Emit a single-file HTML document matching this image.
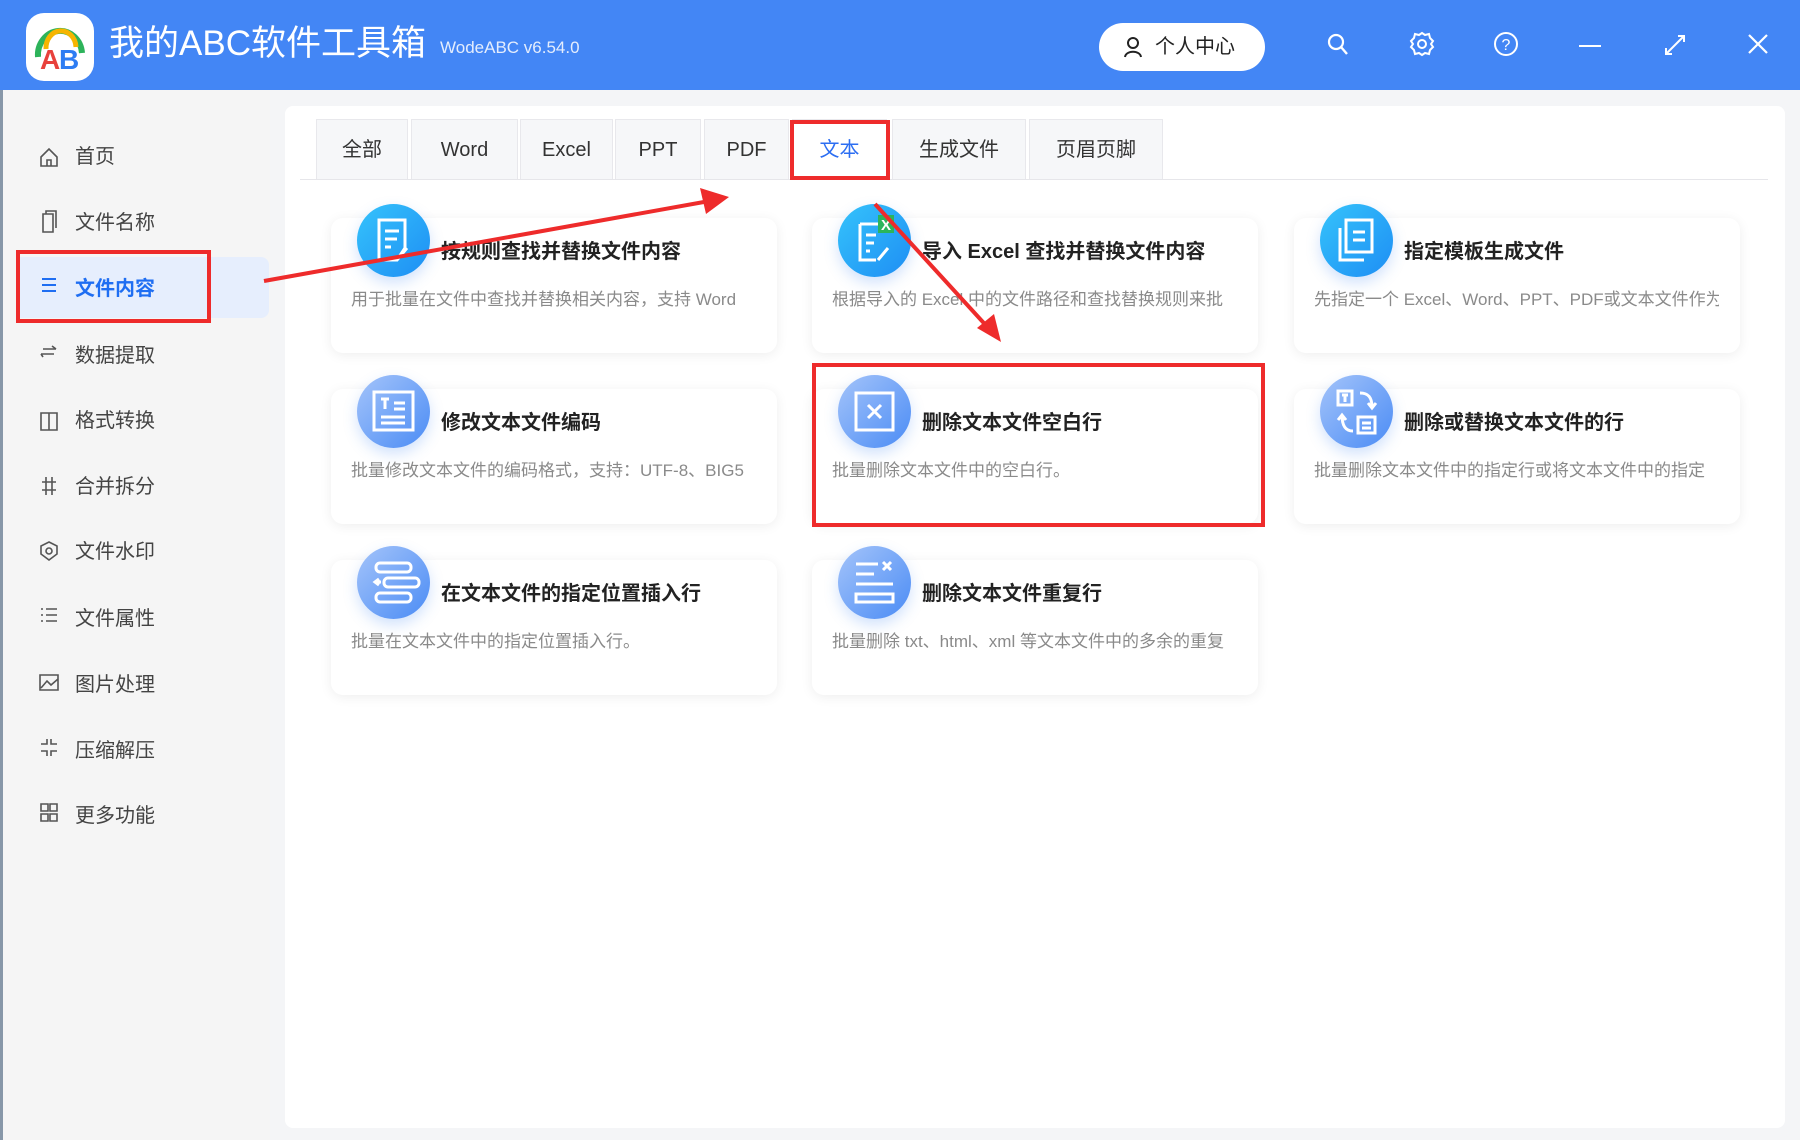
<!DOCTYPE html>
<html><head><meta charset="utf-8"><style>
*{margin:0;padding:0;box-sizing:border-box}
body{width:1800px;height:1140px;overflow:hidden;background:#f4f5f7;font-family:"Liberation Sans","Noto Sans CJK SC",sans-serif;position:relative}
.hdr{position:absolute;left:0;top:0;width:1800px;height:90px;background:#4386f5}
.logo{position:absolute;left:26px;top:13px;width:68px;height:68px;background:#fff;border-radius:18px}
.title{position:absolute;left:109px;top:22px;color:#fff;font-size:35px;line-height:44px}
.ver{position:absolute;left:440px;top:38px;color:#e4edfd;font-size:17px}
.pc{position:absolute;left:1099px;top:23px;width:166px;height:48px;background:#fff;border-radius:24px;font-size:20px;color:#222;line-height:48px;padding-left:56px}
.ic{position:absolute;top:30px}
.side{position:absolute;left:0;top:90px;width:270px;height:1050px;background:#f5f5f5;border-left:3px solid #8797a8}
.si{position:absolute;left:75px;font-size:20px;color:#444;line-height:30px}
.sic{position:absolute;left:38px;width:22px;height:22px}
.main{position:absolute;left:285px;top:106px;width:1500px;height:1022px;background:#fff;border-radius:8px}
.tab{position:absolute;top:119px;height:60px;background:#f6f7f9;border:1px solid #e8e8ec;border-bottom:none;font-size:20px;color:#333;text-align:center;line-height:60px}
.card{position:absolute;width:446px;height:135px;background:#fff;border-radius:12px;box-shadow:0 2px 12px rgba(0,0,0,.07)}
.cir{position:absolute;left:26px;top:-14px;width:73px;height:73px;border-radius:50%;box-shadow:0 6px 14px rgba(70,140,245,.25)}
.c1{background:linear-gradient(135deg,#35c3fb,#1e8ef4)}
.c2{background:linear-gradient(135deg,#a4c4fa,#4b8cf5)}
.ct{position:absolute;left:110px;top:17px;font-size:20px;font-weight:bold;color:#222;white-space:nowrap}
.cd{position:absolute;left:20px;top:67px;width:405px;font-size:17px;color:#8a8a8a;white-space:nowrap;overflow:hidden}
</style></head><body>
<div class="hdr">
<div class="logo"><svg width="68" height="68" viewBox="0 0 68 68"><path d="M12 44 A22 24 0 0 1 56 40" fill="none" stroke="#2db35a" stroke-width="6"/><path d="M20 36 A14 16 0 0 1 50 34" fill="none" stroke="#f6b500" stroke-width="5"/><text x="14" y="56" font-size="28" font-weight="bold" fill="#e8413c" font-family="Liberation Sans">A</text><text x="33" y="56" font-size="28" font-weight="bold" fill="#2e7df3" font-family="Liberation Sans">B</text></svg></div>
<div class="title">我的ABC软件工具箱</div>
<div class="ver">WodeABC v6.54.0</div>
<div class="pc"><svg style="position:absolute;left:24px;top:13px" width="20" height="22" viewBox="0 0 20 22"><circle cx="10" cy="7" r="5" fill="none" stroke="#222" stroke-width="2"/><path d="M2 21 C3 14 17 14 18 21" fill="none" stroke="#222" stroke-width="2"/></svg>个人中心</div>
<svg class="ic" style="left:1326px" width="24" height="28" viewBox="0 0 24 28"><circle cx="10" cy="12" r="7" fill="none" stroke="#fff" stroke-width="2.2"/><path d="M15 17 L21 24" stroke="#fff" stroke-width="2.4"/></svg>
<svg class="ic" style="left:1409px" width="26" height="28" viewBox="0 0 26 28"><path d="M13 3 L16 5 L20 4 L21 8 L24 11 L22 14 L24 17 L21 20 L20 24 L16 23 L13 25 L10 23 L6 24 L5 20 L2 17 L4 14 L2 11 L5 8 L6 4 L10 5 Z" fill="none" stroke="#fff" stroke-width="2"/><circle cx="13" cy="14" r="4" fill="none" stroke="#fff" stroke-width="2"/></svg>
<svg class="ic" style="left:1492px" width="28" height="28" viewBox="0 0 28 28"><circle cx="14" cy="14" r="11" fill="none" stroke="#fff" stroke-width="2"/><text x="14" y="20" text-anchor="middle" font-size="16" fill="#fff" font-family="Liberation Sans">?</text></svg>
<div style="position:absolute;left:1579px;top:45px;width:22px;height:2px;background:#fff"></div>
<svg class="ic" style="left:1662px" width="26" height="28" viewBox="0 0 26 28"><path d="M4 24 L22 6 M16 6 H22 V12 M4 18 V24 H10" fill="none" stroke="#fff" stroke-width="2"/></svg>
<svg class="ic" style="left:1746px" width="24" height="28" viewBox="0 0 24 28"><path d="M3 5 L21 23 M21 5 L3 23" stroke="#fff" stroke-width="2.2"/></svg>
</div>
<div class="side">
<div style="position:absolute;left:14px;top:167px;width:252px;height:61px;background:#e6eefd;border-radius:0 8px 8px 0"></div>
<div style="position:absolute;left:13px;top:160px;width:195px;height:73px;border:4px solid #ee2b2b"></div>
</div>
<div class="si" style="top:142px">首页</div>
<div class="si" style="top:208px">文件名称</div>
<div class="si" style="top:274px;color:#1f6ef2;font-weight:bold">文件内容</div>
<div class="si" style="top:341px">数据提取</div>
<div class="si" style="top:406px">格式转换</div>
<div class="si" style="top:472px">合并拆分</div>
<div class="si" style="top:537px">文件水印</div>
<div class="si" style="top:604px">文件属性</div>
<div class="si" style="top:670px">图片处理</div>
<div class="si" style="top:736px">压缩解压</div>
<div class="si" style="top:801px">更多功能</div>
<svg style="position:absolute;left:38px;top:146px" width="22" height="700" viewBox="0 0 22 700" fill="none" stroke="#555" stroke-width="1.6">
<path d="M3 11 L11 3 L19 11 V20 H3 Z M9 20 V14 H13 V20"/>
<path d="M5 68 H15 V86 H5 Z M8 68 V65 H18 V82"/>
<path d="M4 133 H18 M4 139 H18 M4 145 H18" stroke="#1f6ef2" stroke-width="2"/>
<path d="M5 203 H18 M3 208 H16 M14 200 L18 203 M5 211 L3 208"/>
<path d="M3 267 H19 V284 H3 Z M11 267 V284"/>
<path d="M8 331 V349 M14 331 V349 M4 336 H18 M4 344 H18"/>
<path d="M11 396 L19 400 V408 L11 414 L3 408 V400 Z"/><circle cx="11" cy="405" r="3"/>
<path d="M8 463 H19 M8 469 H19 M8 475 H19 M3 463 H5 M3 469 H5 M3 475 H5"/>
<path d="M2 529 H20 V544 H2 Z M3 542 L9 535 L13 539 L20 533"/>
<path d="M9 593 V598 H3 M13 593 V598 H19 M9 610 V605 H3 M13 610 V605 H19"/>
<path d="M3 658 H10 V665 H3 Z M12 658 H19 V665 H12 Z M3 668 H10 V675 H3 Z M12 668 H19 V675 H12 Z"/>
</svg>
<div class="main"></div>
<div style="position:absolute;left:300px;top:179px;width:1468px;height:1px;background:#e6e6ea"></div>
<div class="tab" style="left:316px;width:92px">全部</div>
<div class="tab" style="left:411px;width:107px">Word</div>
<div class="tab" style="left:520px;width:93px">Excel</div>
<div class="tab" style="left:615px;width:86px">PPT</div>
<div class="tab" style="left:704px;width:85px">PDF</div>
<div class="tab" style="left:792px;width:95px;background:#fff;color:#2c6ef2">文本</div>
<div class="tab" style="left:892px;width:134px">生成文件</div>
<div class="tab" style="left:1029px;width:134px">页眉页脚</div>
<div style="position:absolute;left:790px;top:120px;width:100px;height:60px;border:4px solid #ee2b2b"></div>

<div class="card" style="left:331px;top:218px"><div class="cir c1"><svg width="73" height="73" viewBox="0 0 73 73" fill="none" stroke="#fff" stroke-width="3"><path d="M22 16 H48 V44 L40 56 H22 Z M28 27 H42 M28 35 H40 M28 43 H34 M40 56 L50 44"/></svg></div><div class="ct">按规则查找并替换文件内容</div><div class="cd">用于批量在文件中查找并替换相关内容，支持 Word</div></div>
<div class="card" style="left:812px;top:218px"><div class="cir c1"><svg width="73" height="73" viewBox="0 0 73 73" fill="none" stroke="#fff" stroke-width="3"><path d="M22 20 H44 M22 20 V56 H38 M28 31 H38 M28 39 H36 M28 47 H32 M40 56 L50 44"/><rect x="40" y="11" width="16" height="18" fill="#2bb55c" stroke="none"/><text x="48" y="26" text-anchor="middle" font-size="15" fill="#fff" stroke="none" font-family="Liberation Sans" font-weight="bold">X</text></svg></div><div class="ct">导入 Excel 查找并替换文件内容</div><div class="cd">根据导入的 Excel 中的文件路径和查找替换规则来批</div></div>
<div class="card" style="left:1294px;top:218px"><div class="cir c1"><svg width="73" height="73" viewBox="0 0 73 73" fill="none" stroke="#fff" stroke-width="3"><path d="M20 24 V56 H44 M26 16 H52 V48 H26 Z M33 28 H45 M33 36 H45"/></svg></div><div class="ct">指定模板生成文件</div><div class="cd">先指定一个 Excel、Word、PPT、PDF或文本文件作为</div></div>

<div class="card" style="left:331px;top:389px"><div class="cir c2"><svg width="73" height="73" viewBox="0 0 73 73" fill="none" stroke="#fff" stroke-width="3"><path d="M17 17 H56 V55 H17 Z M24 24 H32 M28 24 V34 M37 28 H48 M37 34 H48 M24 42 H48 M24 48 H48"/></svg></div><div class="ct">修改文本文件编码</div><div class="cd">批量修改文本文件的编码格式，支持：UTF-8、BIG5</div></div>
<div class="card" style="left:812px;top:389px"><div class="cir c2"><svg width="73" height="73" viewBox="0 0 73 73" fill="none" stroke="#fff" stroke-width="3"><path d="M18 18 H55 V55 H18 Z M30 30 L43 43 M43 30 L30 43"/></svg></div><div class="ct">删除文本文件空白行</div><div class="cd">批量删除文本文件中的空白行。</div></div>
<div class="card" style="left:1294px;top:389px"><div class="cir c2"><svg width="73" height="73" viewBox="0 0 73 73" fill="none" stroke="#fff" stroke-width="3"><path d="M18 16 H32 V30 H18 Z M22 20 H28 M25 20 V27 M38 42 H55 V58 H38 Z M42 48 H51 M42 53 H51 M40 18 C48 18 52 22 52 32 M48 28 L52 33 L56 28 M33 56 C25 56 22 50 22 40 M18 45 L22 40 L26 45"/></svg></div><div class="ct">删除或替换文本文件的行</div><div class="cd">批量删除文本文件中的指定行或将文本文件中的指定</div></div>

<div class="card" style="left:331px;top:560px"><div class="cir c2"><svg width="73" height="73" viewBox="0 0 73 73" fill="none" stroke="#fff" stroke-width="3"><rect x="19" y="17" width="35" height="9" rx="4"/><rect x="27" y="32" width="35" height="9" rx="4"/><rect x="19" y="47" width="35" height="9" rx="4"/><path d="M24 36 L18 36 M22 33 L18 36 L22 39"/></svg></div><div class="ct">在文本文件的指定位置插入行</div><div class="cd">批量在文本文件中的指定位置插入行。</div></div>
<div class="card" style="left:812px;top:560px"><div class="cir c2"><svg width="73" height="73" viewBox="0 0 73 73" fill="none" stroke="#fff" stroke-width="3"><path d="M18 18 H40 M18 28 H36 M18 38 H55 M18 48 H55 V56 H18 Z M45 16 L53 24 M53 16 L45 24"/></svg></div><div class="ct">删除文本文件重复行</div><div class="cd">批量删除 txt、html、xml 等文本文件中的多余的重复</div></div>

<div style="position:absolute;left:812px;top:363px;width:453px;height:164px;border:4px solid #ee2b2b"></div>

<svg style="position:absolute;left:0;top:0" width="1800" height="1140">
<path d="M264 281 L715 200" stroke="#ee2b2b" stroke-width="4"/>
<path d="M729 197 L700 188 L706 214 Z" fill="#ee2b2b"/>
<path d="M875 204 L992 332" stroke="#ee2b2b" stroke-width="4"/>
<path d="M1001 342 L977 328 L994 314 Z" fill="#ee2b2b"/>
</svg>
</body></html>
